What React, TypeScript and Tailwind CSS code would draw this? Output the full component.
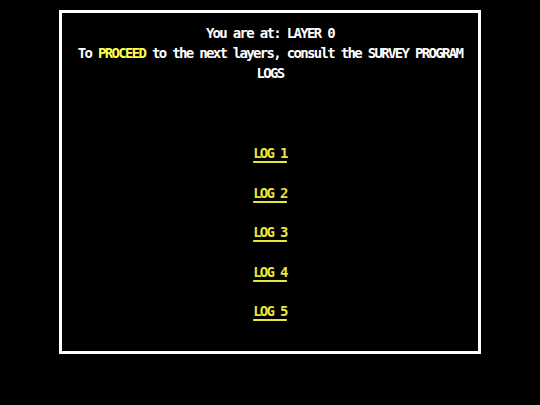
import React from 'react';

const LOGS = ['LOG 1', 'LOG 2', 'LOG 3', 'LOG 4', 'LOG 5'];

export default function App() {
  return (
    <div className="w-[540px] h-[405px] bg-black pt-[10px] overflow-hidden font-['DejaVu_Sans_Mono',monospace] font-bold text-[14px] leading-[20px] tracking-[-1.68px]">
      <div className="mx-auto w-[422px] h-[344px] border-[3px] border-white px-1 pt-[10px] text-center text-white">
        <p>You are at: LAYER 0</p>
        <p>
          To <span className="text-[#ffff50]">PROCEED</span> to the next layers, consult the SURVEY PROGRAM LOGS
        </p>
        <div className="mt-[60px] flex flex-col items-center gap-[19.5px]">
          {LOGS.map((log) => (
            <a
              key={log}
              href="#"
              className="text-[#e6e63c] underline decoration-2 underline-offset-[3px]"
            >
              {log}
            </a>
          ))}
        </div>
      </div>
    </div>
  );
}
